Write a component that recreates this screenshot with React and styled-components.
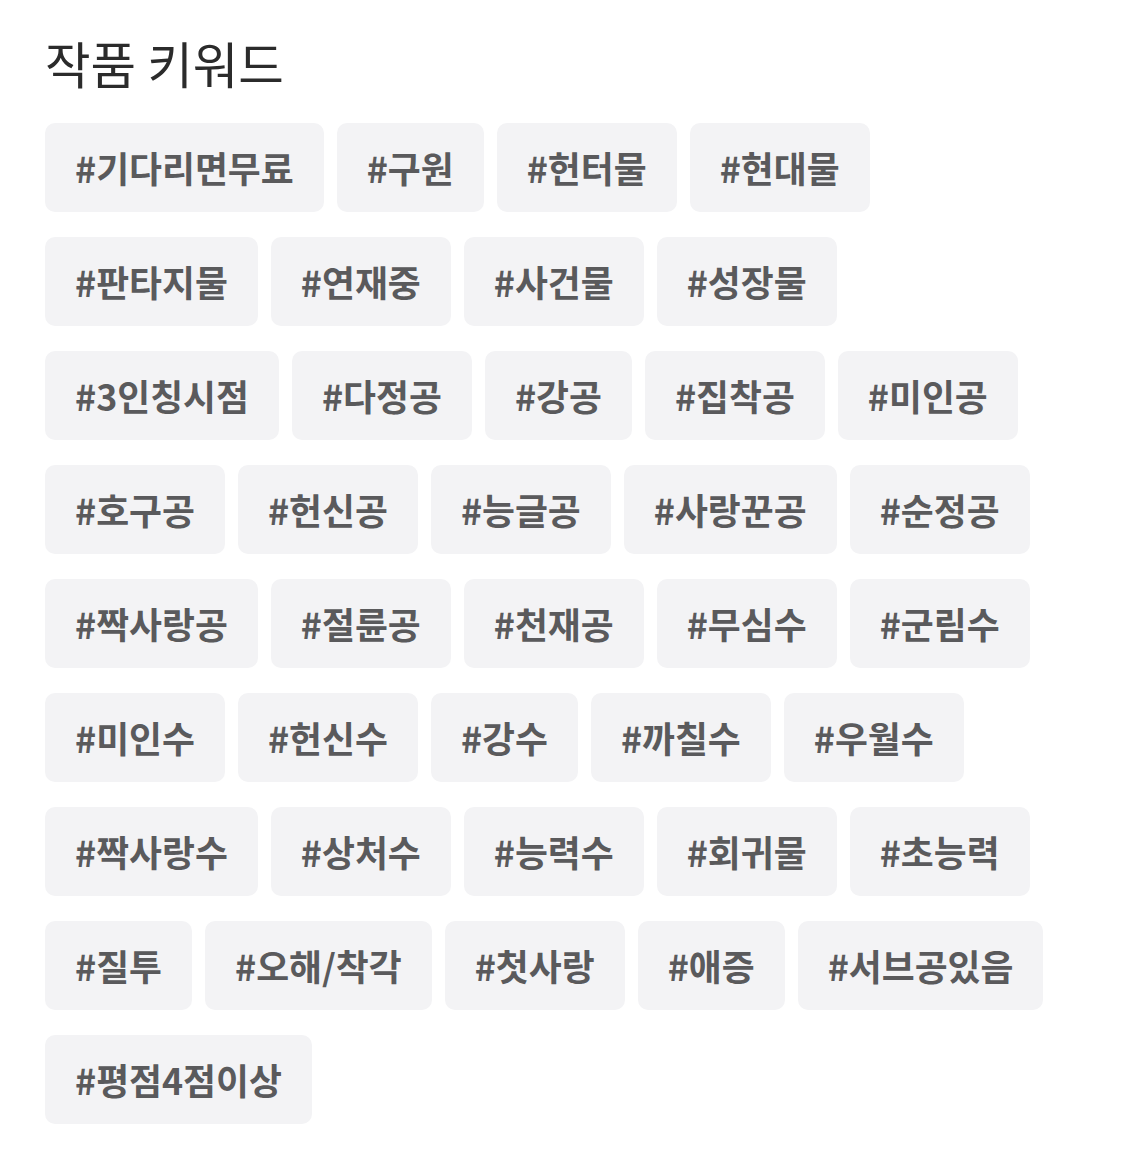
import React from 'react';
import styled, { createGlobalStyle } from 'styled-components';

const keywords = [
  '기다리면무료', '구원', '헌터물', '현대물',
  '판타지물', '연재중', '사건물', '성장물',
  '3인칭시점', '다정공', '강공', '집착공', '미인공',
  '호구공', '헌신공', '능글공', '사랑꾼공', '순정공',
  '짝사랑공', '절륜공', '천재공', '무심수', '군림수',
  '미인수', '헌신수', '강수', '까칠수', '우월수',
  '짝사랑수', '상처수', '능력수', '회귀물', '초능력',
  '질투', '오해/착각', '첫사랑', '애증', '서브공있음',
  '평점4점이상',
];

const GlobalStyle = createGlobalStyle`
  body {
    margin: 0;
    background: #fff;
    font-family: "Noto Sans CJK KR", "Noto Sans", sans-serif;
  }
`;

const Section = styled.section`
  padding: 27px 65px 40px 45px;
`;

const Title = styled.h2`
  margin: 0 0 24px;
  font-size: 49.5px;
  font-weight: 400;
  line-height: 72px;
  color: #2b2b2b;
`;

const TagList = styled.ul`
  display: flex;
  flex-wrap: wrap;
  gap: 25px 13px;
  margin: 0;
  padding: 0;
  list-style: none;
`;

const Tag = styled.li`
  display: flex;
  align-items: center;
  height: 89px;
  padding: 0 30px 2px;
  box-sizing: border-box;
  border-radius: 10px;
  background: #f3f3f5;
  color: #5a5a5c;
  font-size: 35.8px;
  font-weight: 700;
`;

const App = () => (
  <>
    <GlobalStyle />
    <Section>
      <Title>작품 키워드</Title>
      <TagList>
        {keywords.map((k) => (
          <Tag key={k}>#{k}</Tag>
        ))}
      </TagList>
    </Section>
  </>
);

export default App;
